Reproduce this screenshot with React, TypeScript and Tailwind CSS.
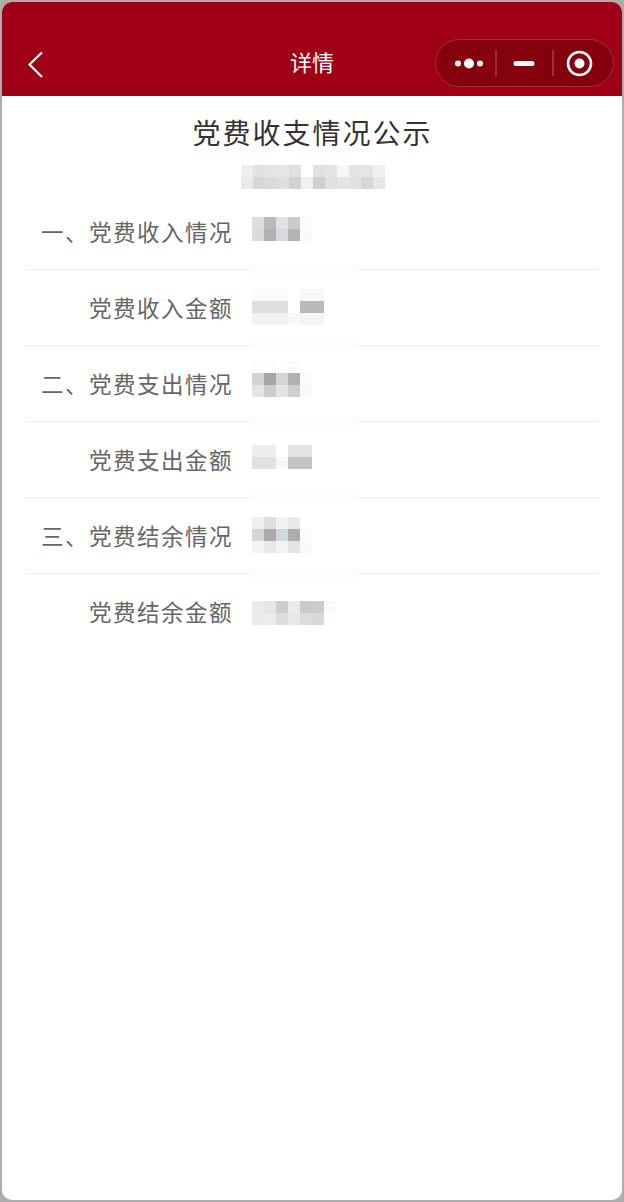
import React from 'react';

const CJK = "font-['Noto_Sans_CJK_SC','Noto_Sans',sans-serif]";

// mosaic blocks, one class per 12px cell
const subtitleCells = [
  ['bg-[#efefef]', 'bg-[#e2e2e3]', 'bg-[#e5e4e3]', 'bg-[#e4e6ea]', 'bg-[#e0e0e0]', 'bg-[#ffffff]', 'bg-[#e1e1e1]', 'bg-[#e6e4e3]', 'bg-[#f5f6f8]', 'bg-[#e5e4e1]', 'bg-[#e3e5e8]', 'bg-[#efeff0]'],
  ['bg-[#e9e9e9]', 'bg-[#d5d6d6]', 'bg-[#dbdad9]', 'bg-[#dbdee3]', 'bg-[#d1d1d0]', 'bg-[#f0f0f0]', 'bg-[#d0d0d0]', 'bg-[#e2dfdc]', 'bg-[#e2e6ea]', 'bg-[#e2e1dc]', 'bg-[#d5d7d9]', 'bg-[#e5e6e7]'],
];

const rows = [
  {
    label: '一、党费收入情况',
    top: 'pt-[23px]',
    cells: [
      ['bg-[#e0dddd]', 'bg-[#bdb9b6]', 'bg-[#dfe3e6]', 'bg-[#cdcbca]', 'bg-[#fbfbfd]'],
      ['bg-[#dddbda]', 'bg-[#b5b1ae]', 'bg-[#d5dadc]', 'bg-[#b5b2af]', 'bg-[#f9fafb]'],
    ],
  },
  {
    label: '党费收入金额',
    top: 'pt-[19px]',
    cells: [
      ['bg-[#fbfbfb]', 'bg-[#fbfbfb]', 'bg-[#fbfbfb]', 'bg-[#ffffff]', 'bg-[#f8f8f8]', 'bg-[#f8f8f8]'],
      ['bg-[#dfdfdd]', 'bg-[#dfdfdd]', 'bg-[#dfdfdd]', 'bg-[#ffffff]', 'bg-[#b9b9b9]', 'bg-[#b9b9b9]'],
      ['bg-[#f2f2f2]', 'bg-[#f2f2f2]', 'bg-[#f2f2f2]', 'bg-[#f8f8f8]', 'bg-[#f4f4f4]', 'bg-[#f4f4f4]'],
    ],
  },
  {
    label: '二、党费支出情况',
    top: 'pt-[15px]',
    cells: [
      ['bg-[#fefefe]', 'bg-[#fdfdfb]', 'bg-[#fefefe]', 'bg-[#fafafa]', 'bg-[#ffffff]'],
      ['bg-[#d5d3d3]', 'bg-[#a8a4a0]', 'bg-[#d0d7dc]', 'bg-[#b3b2b1]', 'bg-[#fbfcfd]'],
      ['bg-[#e6e4e5]', 'bg-[#cfcdcc]', 'bg-[#e3e4e6]', 'bg-[#d1cfcd]', 'bg-[#f8f9fa]'],
    ],
  },
  {
    label: '党费支出金额',
    top: 'pt-[23px]',
    cells: [
      ['bg-[#eeeeef]', 'bg-[#eeeeef]', 'bg-[#ffffff]', 'bg-[#e4e4e4]', 'bg-[#e4e4e4]'],
      ['bg-[#e1e1e2]', 'bg-[#e1e1e2]', 'bg-[#f8f8f8]', 'bg-[#c4c4c4]', 'bg-[#c4c4c4]'],
    ],
  },
  {
    label: '三、党费结余情况',
    top: 'pt-[19px]',
    cells: [
      ['bg-[#f0eeee]', 'bg-[#e0dfde]', 'bg-[#f1f2f4]', 'bg-[#ebe9e8]', 'bg-[#ffffff]'],
      ['bg-[#d6d4d5]', 'bg-[#aeaba6]', 'bg-[#d0d8da]', 'bg-[#adacab]', 'bg-[#fafbfc]'],
      ['bg-[#f4f4f4]', 'bg-[#e9e8e9]', 'bg-[#f2f3f5]', 'bg-[#e6e3e4]', 'bg-[#fafafc]'],
    ],
  },
  {
    label: '党费结余金额',
    top: 'pt-[27px]',
    cells: [
      ['bg-[#ebebeb]', 'bg-[#e6e6e6]', 'bg-[#cdcdcd]', 'bg-[#e9ebec]', 'bg-[#cbcbcb]', 'bg-[#cdcccb]', 'bg-[#f8fbfe]'],
      ['bg-[#ebebeb]', 'bg-[#ececec]', 'bg-[#dddddd]', 'bg-[#e6e8ea]', 'bg-[#dcdcdc]', 'bg-[#d9d8d8]', 'bg-[#fcfdfe]'],
    ],
  },
];

function Mosaic({ cells }: { cells: string[][] }) {
  return (
    <div className="flex flex-col">
      {cells.map((line, i) => (
        <div key={i} className="flex">
          {line.map((c, j) => (
            <div key={j} className={`w-3 h-3 ${c}`} />
          ))}
        </div>
      ))}
    </div>
  );
}

function Capsule() {
  return (
    <div className="absolute left-[433px] top-[37px] w-[179px] h-[48px] rounded-full bg-[#85000f] border border-[#a52a38] flex items-center">
      <svg width="177" height="46" viewBox="0 0 177 46" fill="none">
        <circle cx="22" cy="23.5" r="3" fill="#fff" />
        <circle cx="33" cy="23.5" r="5" fill="#fff" />
        <circle cx="44" cy="23.5" r="3" fill="#fff" />
        <rect x="59" y="10" width="2" height="26" fill="#a52a38" />
        <rect x="77.500" y="21" width="21" height="5" rx="2.5" fill="#fff" />
        <rect x="116" y="10" width="2" height="26" fill="#a52a38" />
        <circle cx="143.500" cy="23.500" r="11.500" stroke="#fff" strokeWidth="2.600" />
        <circle cx="143.500" cy="23.500" r="5" fill="#fff" />
      </svg>
    </div>
  );
}

export default function App() {
  return (
    <div className={`w-[624px] h-[1202px] bg-[#adadad] p-[2px] ${CJK}`}>
      <div className="w-[620px] h-[1198px] bg-white rounded-[10px] overflow-hidden flex flex-col">
        {/* nav bar */}
        <div className="relative h-[94px] shrink-0 bg-[#9f0015]">
          <svg className="absolute left-[24px] top-[48px]" width="20" height="30" viewBox="0 0 20 30" fill="none">
            <path d="M16 2.500 L3.500 14.500 L16 27" stroke="#fff" strokeWidth="2.200" />
          </svg>
          <div className="pt-[44px] text-center text-[22px] leading-[30px] text-white">详情</div>
          <Capsule />
        </div>

        <div className="text-center text-[28px] leading-[40px] tracking-[2px] text-[#333333] pt-[16px] pl-[1px]">党费收支情况公示</div>
        <div className="flex justify-center pt-[13px] pl-[1px]">
          <Mosaic cells={subtitleCells} />
        </div>

        <div className="pt-[5px] px-[23px]">
          {rows.map((row, i) => (
            <div key={i} className="relative flex h-[76px] border-b border-[#eeeeee] last:border-b-0">
              <div className="w-[208px] shrink-0 text-right text-[22.5px] leading-[74px] tracking-[1.5px] text-[#666666]">{row.label}</div>
              <div className={`pl-[19px] ${row.top}`}>
                <Mosaic cells={row.cells} />
              </div>
              {i < rows.length - 1 && (
                <div className="absolute left-[227px] bottom-[-6px] w-[104px] h-[11px] bg-[#fdfdfd]" />
              )}
            </div>
          ))}
        </div>
      </div>
    </div>
  );
}
